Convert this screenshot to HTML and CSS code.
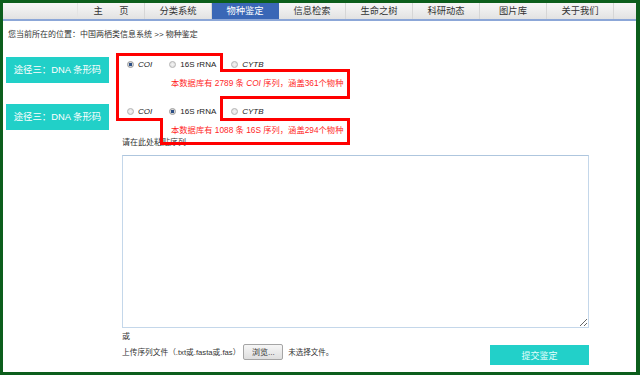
FILE: index.html
```html
<!DOCTYPE html>
<html lang="zh-CN">
<head>
    <meta charset="UTF-8">
    <title>物种鉴定</title>
    <link rel="stylesheet" href="styles.css">
</head>
<body>
<div class="page">
    <ul class="nav">
        <li class="first"><span class="home">主 页</span></li>
        <li>分类系统</li>
        <li class="active">物种鉴定</li>
        <li>信息检索</li>
        <li>生命之树</li>
        <li>科研动态</li>
        <li>图片库</li>
        <li>关于我们</li>
    </ul>

    <div class="crumb">您当前所在的位置：中国两栖类信息系统 &gt;&gt; 物种鉴定</div>

    <form class="main">
        <div class="way">途径三：DNA 条形码</div>
        <div class="options">
            <div class="radios">
                <label><input type="radio" name="g1" checked><i>COI</i></label>
                <label><input type="radio" name="g1">16S rRNA</label>
                <label><input type="radio" name="g1"><i>CYTB</i></label>
            </div>
            <div class="note">本数据库有 2789 条 <i>COI</i> 序列，涵盖361个物种</div>
        </div>

        <div class="way">途径三：DNA 条形码</div>
        <div class="options">
            <div class="radios">
                <label><input type="radio" name="g2"><i>COI</i></label>
                <label><input type="radio" name="g2" checked>16S rRNA</label>
                <label><input type="radio" name="g2"><i>CYTB</i></label>
            </div>
            <div class="note">本数据库有 1088 条 16S 序列，涵盖294个物种</div>
        </div>

        <div class="seq">
            <div class="paste">请在此处粘贴序列</div>
            <textarea class="box"></textarea>
            <div class="bottom">
                <div class="upload">
                    <div class="or">或</div>
                    <div class="file">
                        上传序列文件（.txt或.fasta或.fas）
                        <span class="browse">浏览...</span>
                        <span class="none">未选择文件。</span>
                    </div>
                </div>
                <button type="button" class="submit">提交鉴定</button>
            </div>
        </div>
    </form>

    <!-- red annotation drawn over the options -->
    <svg class="mark" width="633" height="369">
        <path d="M114.5,51.5 H218.5 V67.5 H345.5 V94.5 H218.5 V116.5 H345.5 V140.5 H158.5 V116.5 H114.5 Z"
              fill="none" stroke="#ff0000" stroke-width="3"/>
    </svg>
</div>
</body>
</html>
```

FILE: styles.css
```css
body {
    margin: 0;
    background: #0c5e1c;
    font-family: "Liberation Sans", "Noto Sans CJK SC", sans-serif;
    color: #333;
}
.page {
    position: relative;
    margin: 3px 4px 3px 3px;
    height: 369px;
    background: #fff;
    overflow: hidden;
}
.nav {
    display: flex;
    margin: 0;
    padding: 0 0 0 74px;
    list-style: none;
    height: 16px;
    background: linear-gradient(#f6f6f6, #eeeeee 45%, #e2e2e2);
    border-bottom: 2px solid #8ca7d8;
}
.nav li {
    width: 66px;
    border-right: 1px solid #d6d6d6;
    line-height: 16px;
    font-size: 9.3px;
    text-align: center;
    color: #333;
}
.nav li.first {
    border-left: 1px solid #e4e4e4;
}
.nav .home {
    word-spacing: 14px;
}
.nav li.active {
    background: #3a67b6;
    color: #fff;
    border-right-color: #3a67b6;
}
.crumb {
    margin-top: 8px;
    padding-left: 5px;
    font-size: 8px;
    line-height: 12px;
    color: #333;
}
.main {
    display: grid;
    grid-template-columns: 103px 467px;
    column-gap: 13px;
    margin-top: 16px;
    padding-left: 3px;
}
.way {
    height: 26px;
    line-height: 26px;
    background: #21d0c8;
    color: #fff;
    font-size: 9.4px;
    text-align: center;
}
.options {
    height: 47px;
}
.radios {
    display: flex;
    padding-left: 5px;
    height: 14px;
    align-items: center;
    font-size: 8px;
    color: #222;
}
.radios label {
    display: flex;
    align-items: center;
    margin-right: 17px;
}
.radios label:nth-child(2) {
    margin-right: 15px;
}
.radios input {
    appearance: none;
    width: 7px;
    height: 7px;
    margin: 0 4px 0 0;
    border: 1px solid #b4b4b4;
    border-radius: 50%;
    background: radial-gradient(circle, #f4f4f4, #dcdcdc);
    box-sizing: border-box;
}
.radios input:checked {
    background: radial-gradient(circle, #2c4f86 0, #2c4f86 1.5px, #d8d8d8 2px);
    border-color: #9a9a9a;
}
.note {
    margin-top: 6px;
    padding-left: 49px;
    font-size: 8.3px;
    line-height: 12px;
    color: #ff1f1f;
}
.seq {
    grid-column: 2;
    margin-top: -14px;
}
.paste {
    font-size: 8px;
    line-height: 12px;
    color: #333;
}
.box {
    display: block;
    box-sizing: border-box;
    width: 467px;
    height: 173px;
    margin-top: 6px;
    border: 1px solid #c4d7ea;
    border-top-color: #aec6de;
}
.bottom {
    display: flex;
    justify-content: space-between;
    align-items: flex-end;
}
.or {
    margin-top: 3px;
    font-size: 8px;
    line-height: 12px;
}
.file {
    display: flex;
    align-items: center;
    height: 17px;
    font-size: 7.7px;
    white-space: nowrap;
}
.browse {
    display: inline-block;
    margin: 0 5px 0 3px;
    width: 40px;
    height: 16px;
    line-height: 15px;
    box-sizing: border-box;
    border: 1px solid #a5a5a5;
    border-radius: 2px;
    background: linear-gradient(#f6f6f6, #dedede);
    text-align: center;
    font-size: 8px;
}
.none {
    font-size: 7.5px;
}
.submit {
    width: 99px;
    height: 20px;
    margin-bottom: -5px;
    border: 0;
    background: #22d0c9;
    color: #e4fffd;
    font-family: "Noto Sans CJK SC", sans-serif;
    font-size: 9px;
}
.mark {
    position: absolute;
    left: 0;
    top: 0;
    pointer-events: none;
}
```
